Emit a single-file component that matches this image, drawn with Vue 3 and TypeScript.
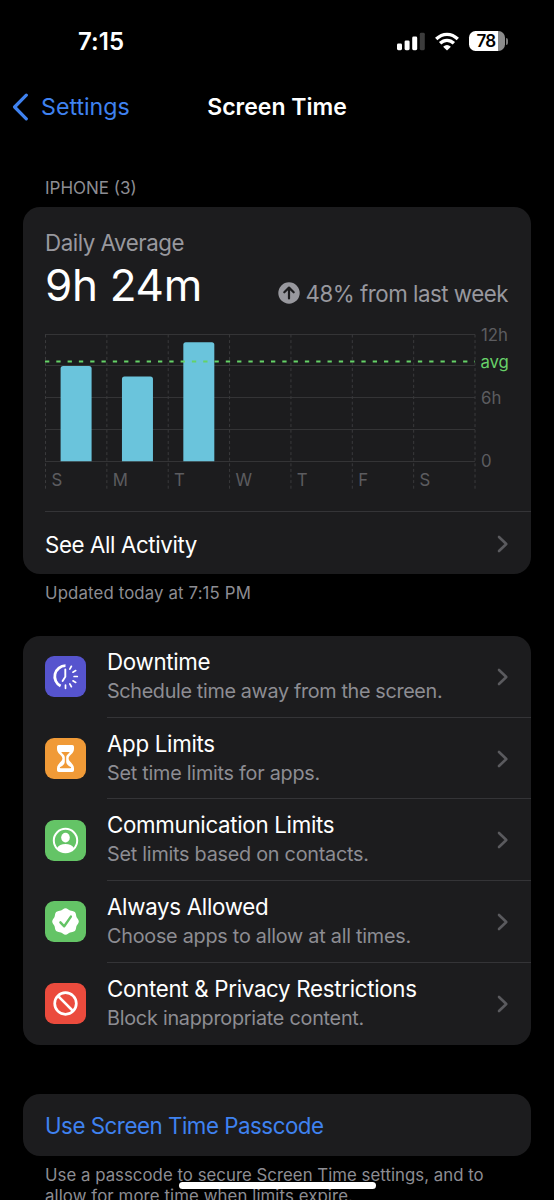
<script setup lang="ts">
interface Limit {
  id: string
  title: string
  detail: string
  color: string
}

interface Day {
  label: string
  top: number | null
}

const days: Day[] = [
  { label: 'S', top: 366 },
  { label: 'M', top: 376.4 },
  { label: 'T', top: 342.2 },
  { label: 'W', top: null },
  { label: 'T', top: null },
  { label: 'F', top: null },
  { label: 'S', top: null },
]

const column = 61.36
const chartTop = 324
const base = 461.2
const gridX = Array.from({ length: 8 }, (_, i) => 0.5 + i * column)
const gridY = [334.4, 365.8, 397.8, 429.4, base].map((y) => Math.floor(y - chartTop) + 0.5)

function barPath(index: number, top: number): string {
  const x = 15.6 + index * column
  const w = 31
  const y = top - chartTop
  const b = base - chartTop
  return `M${x} ${b}V${y + 2.5}q0-2.5 2.5-2.5h${w - 5}q2.5 0 2.5 2.5V${b}z`
}

const limits: Limit[] = [
  { id: 'downtime', title: 'Downtime', detail: 'Schedule time away from the screen.', color: 'indigo' },
  { id: 'apps', title: 'App Limits', detail: 'Set time limits for apps.', color: 'orange' },
  { id: 'people', title: 'Communication Limits', detail: 'Set limits based on contacts.', color: 'green' },
  { id: 'allowed', title: 'Always Allowed', detail: 'Choose apps to allow at all times.', color: 'green' },
  { id: 'content', title: 'Content & Privacy Restrictions', detail: 'Block inappropriate content.', color: 'red' },
]

const rays = [-60, -30, 0, 30, 60, 90].map((deg) => {
  const a = (deg * Math.PI) / 180
  return {
    x1: 20.5 + 8.6 * Math.cos(a),
    y1: 20.5 + 8.6 * Math.sin(a),
    x2: 20.5 + 11.8 * Math.cos(a),
    y2: 20.5 + 11.8 * Math.sin(a),
  }
})

const seal = Array.from({ length: 64 }, (_, i) => {
  const a = (i / 64) * Math.PI * 2
  const r = 12.6 + 0.7 * Math.cos(8 * a)
  return `${(20.5 + r * Math.sin(a)).toFixed(2)},${(20.5 - r * Math.cos(a)).toFixed(2)}`
}).join(' ')
</script>

<template>
  <div class="screen">
    <header class="status">
      <span class="time">7:15</span>
      <div class="indicators">
        <svg class="signal" width="28" height="19" viewBox="0 0 28 19">
          <rect x="0" y="11.6" width="5" height="6.6" rx="1.4" fill="#fff" />
          <rect x="7.6" y="8.4" width="5" height="9.8" rx="1.4" fill="#fff" />
          <rect x="15.2" y="4.6" width="5" height="13.6" rx="1.4" fill="#fff" />
          <rect x="22.8" y="0.8" width="5" height="17.4" rx="1.4" fill="#3c3c3c" />
        </svg>
        <svg class="wifi" width="24" height="19" viewBox="0 0 24 19" fill="none" stroke="#fff">
          <path d="M1.2 7Q6 2.3 12 2.3T22.8 7" stroke-width="3.3" />
          <path d="M5.1 11.3Q8.2 8.3 12 8.3T18.9 11.3" stroke-width="3.3" />
          <path d="M12 18.5 8.1 14.7Q12 11.3 15.9 14.7Z" fill="#fff" stroke="none" />
        </svg>
        <div class="battery"><span>78</span></div>
        <i class="cap"></i>
      </div>
    </header>

    <nav class="nav">
      <svg width="17" height="28" viewBox="0 0 17 28" fill="none">
        <path d="M14.3 2.2 2.6 14l11.7 11.8" stroke="#3f82f0" stroke-width="3.2" stroke-linecap="round" stroke-linejoin="round" />
      </svg>
      <span class="back">Settings</span>
      <h1>Screen Time</h1>
    </nav>

    <p class="section">IPHONE (3)</p>

    <section class="card summary">
      <p class="caption">Daily Average</p>
      <div class="totals">
        <strong>9h 24m</strong>
        <div class="delta">
          <svg width="22" height="22" viewBox="0 0 22 22">
            <circle cx="11" cy="11" r="10.7" fill="#98989e" />
            <path d="M11 16.5V6M6.3 10.3 11 5.6l4.7 4.7" fill="none" stroke="#1c1c1e" stroke-width="2.2" stroke-linecap="round" stroke-linejoin="round" />
          </svg>
          <span>48% from last week</span>
        </div>
      </div>
      <svg class="chart" width="486" height="170" viewBox="0 0 486 170">
        <g stroke="#343436" stroke-width="1">
          <line v-for="y in gridY" :key="y" x1="0" x2="430" :y1="y" :y2="y" />
        </g>
        <g stroke="#3a3a3c" stroke-width="1" stroke-dasharray="3 2.6">
          <line v-for="x in gridX" :key="x" :x1="x" :x2="x" y1="10.5" y2="166" />
        </g>
        <template v-for="(day, i) in days" :key="i">
          <path v-if="day.top !== null" :d="barPath(i, day.top)" fill="#6ac4dc" />
          <text class="axis" :x="6.4 + i * column" y="162">{{ day.label }}</text>
        </template>
        <line x1="0" x2="430" y1="37.4" y2="37.4" stroke="#65d267" stroke-width="2" stroke-dasharray="4.3 7" />
        <text class="axis" x="436" y="17.2">12h</text>
        <text class="axis avg" x="435.5" y="44.4">avg</text>
        <text class="axis" x="436" y="80.2">6h</text>
        <text class="axis" x="436" y="143.4">0</text>
      </svg>
      <div class="activity">
        <span>See All Activity</span>
        <svg class="chevron" width="12" height="18" viewBox="0 0 12 18"><path d="M2 2l7.3 7L2 16" /></svg>
      </div>
    </section>

    <p class="updated">Updated today at 7:15 PM</p>

    <section class="card limits">
      <div v-for="item in limits" :key="item.id" class="row">
        <svg class="tile" :class="item.color" width="41" height="41" viewBox="0 0 41 41" fill="none">
          <g v-if="item.id === 'downtime'" stroke="#fff" stroke-linecap="round">
            <path d="M20.5 9.7A10.8 10.8 0 0 0 15.6 30.1" stroke-width="2.8" stroke-linecap="butt" />
            <path d="M20.3 13.5V20.7L17.6 25" stroke-width="1.9" />
            <line v-for="(r, i) in rays" :key="i" v-bind="r" stroke-width="1.7" />
          </g>
          <g v-else-if="item.id === 'apps'">
            <path d="M13.8 7h13.4q1.8 0 1.8 1.7V11c0 4.5-5.4 6.3-5.4 9.6s5.4 5 5.4 9.6v2q0 1.8-1.8 1.8H13.8Q12 34 12 32.2v-2c0-4.6 5.4-6.3 5.4-9.6S12 15.5 12 11V8.7Q12 7 13.8 7z" fill="#fff" />
            <path d="M16.3 14h8.4c-.9 2-3.5 2.7-3.5 5.6v4c0 2.8 1.7 3.8 4.5 5.3.8.5.5 1.3-.4 1.3h-9.6c-.9 0-1.2-.8-.4-1.3 2.8-1.5 4.5-2.5 4.5-5.3v-4c0-2.9-2.6-3.6-3.5-5.6z" fill="#f09a37" />
          </g>
          <g v-else-if="item.id === 'people'">
            <circle cx="20.5" cy="20.5" r="11.7" stroke="#fff" stroke-width="2" />
            <ellipse cx="20.5" cy="17.6" rx="4.3" ry="4.9" fill="#fff" />
            <path d="M12.1 28.3c1.3-3 4.6-4.2 8.4-4.2s7.1 1.2 8.4 4.2a11.6 11.6 0 0 1-16.8 0z" fill="#fff" />
          </g>
          <g v-else-if="item.id === 'allowed'">
            <polygon :points="seal" fill="#fff" />
            <path d="M15.4 21.3 19.2 25.3 25.9 15.6" stroke="#64c466" stroke-width="2.4" stroke-linecap="round" stroke-linejoin="round" />
          </g>
          <g v-else stroke="#fff" stroke-width="2.7">
            <circle cx="20.5" cy="20.5" r="10.8" />
            <path d="M12.9 12.9 28.1 28.1" />
          </g>
        </svg>
        <div class="content">
          <div class="words">
            <span class="title">{{ item.title }}</span>
            <span class="detail">{{ item.detail }}</span>
          </div>
          <svg class="chevron" width="12" height="18" viewBox="0 0 12 18"><path d="M2 2l7.3 7L2 16" /></svg>
        </div>
      </div>
    </section>

    <section class="card passcode">Use Screen Time Passcode</section>
    <p class="footer">Use a passcode to secure Screen Time settings, and to<br /><span class="last">allow for more time when limits expire.</span></p>
    <div class="home"></div>
  </div>
</template>

<style>
html,
body {
  background: #000;
  overflow: hidden;
}
</style>

<style scoped>
.screen {
  position: relative;
  display: flex;
  flex-direction: column;
  width: 554px;
  height: 1200px;
  overflow: hidden;
  box-sizing: border-box;
  background: #000;
  color: #fff;
  font-family: Inter, "Liberation Sans", sans-serif;
  font-size: 22.3px;
  letter-spacing: -0.3px;
  white-space: nowrap;
}
p, h1 { margin: 0; }
.status {
  flex: none;
  display: flex;
  justify-content: space-between;
  align-items: center;
  height: 82px;
  padding: 0 46px 0 78px;
  box-sizing: border-box;
}
.time { font-size: 24px; font-weight: 600; letter-spacing: 0.1px; }
.indicators { display: flex; align-items: center; }
.wifi { margin-left: 10px; }
.battery {
  display: flex;
  justify-content: center;
  align-items: center;
  width: 36px;
  height: 20px;
  margin-left: 10px;
  padding-right: 2px;
  box-sizing: border-box;
  border-radius: 6.5px;
  background: linear-gradient(90deg, #fff 28.5px, #8b8b8b 28.5px);
  color: #000;
  font-size: 17px;
  font-weight: 600;
  letter-spacing: -0.7px;
}
.cap { width: 2px; height: 7px; margin-left: 1px; border-radius: 0 2px 2px 0; background: #777; }
.nav {
  position: relative;
  flex: none;
  display: flex;
  align-items: center;
  height: 50px;
  padding-left: 12px;
  color: #3f82f0;
}
.back { margin-left: 12px; font-size: 23.2px; letter-spacing: 0; }
h1 {
  width: 554px;
  position: absolute;
  left: 0;
  text-align: center;
  color: #fff;
  font-size: 23px;
  font-weight: 600;
  letter-spacing: 0;
}
.section { flex: none; margin: 41px 0 0 45px; height: 30px; line-height: 30px; font-size: 17px; letter-spacing: 0; color: #8d8d93; }
.card { flex: none; margin: 0 23px; border-radius: 17px; background: #1c1c1e; }
.summary { display: flex; flex-direction: column; height: 367px; margin-top: 4px; padding-left: 22px; box-sizing: border-box; }
.caption { margin-top: 21px; height: 30px; line-height: 30px; letter-spacing: -0.45px; color: #98989e; }
.totals { flex: none; display: flex; justify-content: space-between; height: 56px; padding-right: 23px; }
.totals strong { font-size: 44px; line-height: 55px; font-weight: 400; letter-spacing: -0.3px; }
.delta { display: flex; align-items: center; gap: 5px; height: 30px; margin-top: 20px; letter-spacing: -0.48px; color: #98989e; }
.chart { flex: none; display: block; margin-top: 10px; }
.axis { fill: #5c5c60; font-size: 16.8px; letter-spacing: 0; }
.axis.avg { fill: #67d169; letter-spacing: -0.2px; }
.activity {
  flex: none;
  display: flex;
  justify-content: space-between;
  align-items: center;
  height: 60px;
  margin-top: 17px;
  padding: 2px 22px 0 0;
  border-top: 1px solid #343437;
  letter-spacing: -0.38px;
}
.chevron { flex: none; fill: none; stroke: #5a5a5e; stroke-width: 2.6; stroke-linecap: round; stroke-linejoin: round; }
.updated { flex: none; margin: 4px 0 0 45px; height: 30px; line-height: 30px; font-size: 16.8px; letter-spacing: 0.14px; color: #8d8d93; }
.limits { display: grid; grid-template-rows: repeat(5, 1fr); height: 408.5px; margin-top: 28px; }
.row { display: flex; align-items: center; padding-left: 22px; }
.tile { flex: none; margin-right: 21px; border-radius: 9px; }
.indigo { background: #5654ce; }
.orange { background: #f09a37; }
.green { background: #64c466; }
.red { background: #eb4b3d; }
.content {
  flex: 1;
  align-self: stretch;
  display: flex;
  justify-content: space-between;
  align-items: center;
  padding-right: 22px;
  border-bottom: 1px solid #343437;
}
.row .chevron { margin-top: 1px; }
.row:last-child .content { border-bottom-color: transparent; }
.words { display: flex; flex-direction: column; }
.title { line-height: 29px; }
.detail { line-height: 30px; font-size: 19.8px; letter-spacing: -0.24px; color: #8d8d93; }
.row:first-child .detail { letter-spacing: -0.34px; }
.passcode { height: 62px; margin-top: 49.5px; padding-left: 22px; line-height: 63px; letter-spacing: -0.47px; color: #3f82f0; }
.footer { flex: none; margin: 9px 0 0 45px; font-size: 16.8px; line-height: 20.5px; letter-spacing: 0.03px; color: #8d8d93; }
.last { letter-spacing: 0.1px; }
.home { position: absolute; left: 179px; top: 1182px; width: 197px; height: 7px; border-radius: 4px; background: #fff; }
</style>
